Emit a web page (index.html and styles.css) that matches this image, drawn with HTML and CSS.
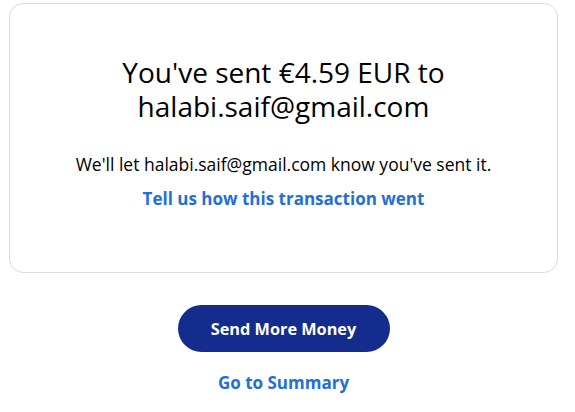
FILE: index.html
```html
<!DOCTYPE html>
<html lang="en">
<head>
<meta charset="utf-8">
<link rel="stylesheet" href="styles.css">
</head>
<body>
<main class="page">
  <section class="card">
    <h1 class="title">You've sent €4.59 EUR to halabi.saif@gmail.com</h1>
    <p class="note">We'll let halabi.saif@gmail.com know you've sent it.</p>
    <a class="link" href="#">Tell us how this transaction went</a>
  </section>
  <div class="actions">
    <a class="btn" href="#">Send More Money</a>
    <a class="link" href="#">Go to Summary</a>
  </div>
</main>
</body>
</html>
```

FILE: styles.css
```css
* { box-sizing: border-box; }
html, body { margin: 0; background: #fff; }
body {
  font-family: "Open Sans", "Noto Sans", sans-serif;
  color: #000;
}
.page {
  margin: 3px 17px 0 9px;
}
.card {
  border: 1px solid #dcdcdc;
  border-radius: 14px;
  height: 270px;
  padding: 51px 30px 0;
  display: flex;
  flex-direction: column;
  align-items: center;
  text-align: center;
}
.title {
  margin: 0;
  font-size: 28px;
  font-weight: 400;
  line-height: 34px;
  max-width: 380px;
}
.note {
  margin: 29px 0 0;
  font-size: 17.5px;
  line-height: 24px;
}
.link {
  color: #236fd6;
  font-weight: 700;
  font-size: 17px;
  line-height: 24px;
  text-decoration: none;
}
.card .link { margin-top: 11px; }
.actions {
  display: flex;
  flex-direction: column;
  align-items: center;
  padding-top: 32px;
  gap: 19px;
}
.btn {
  display: flex;
  align-items: center;
  justify-content: center;
  width: 212px;
  height: 47px;
  border-radius: 24px;
  background: #142c8e;
  color: #fff;
  font-weight: 700;
  font-size: 16.3px;
  text-decoration: none;
}
```
